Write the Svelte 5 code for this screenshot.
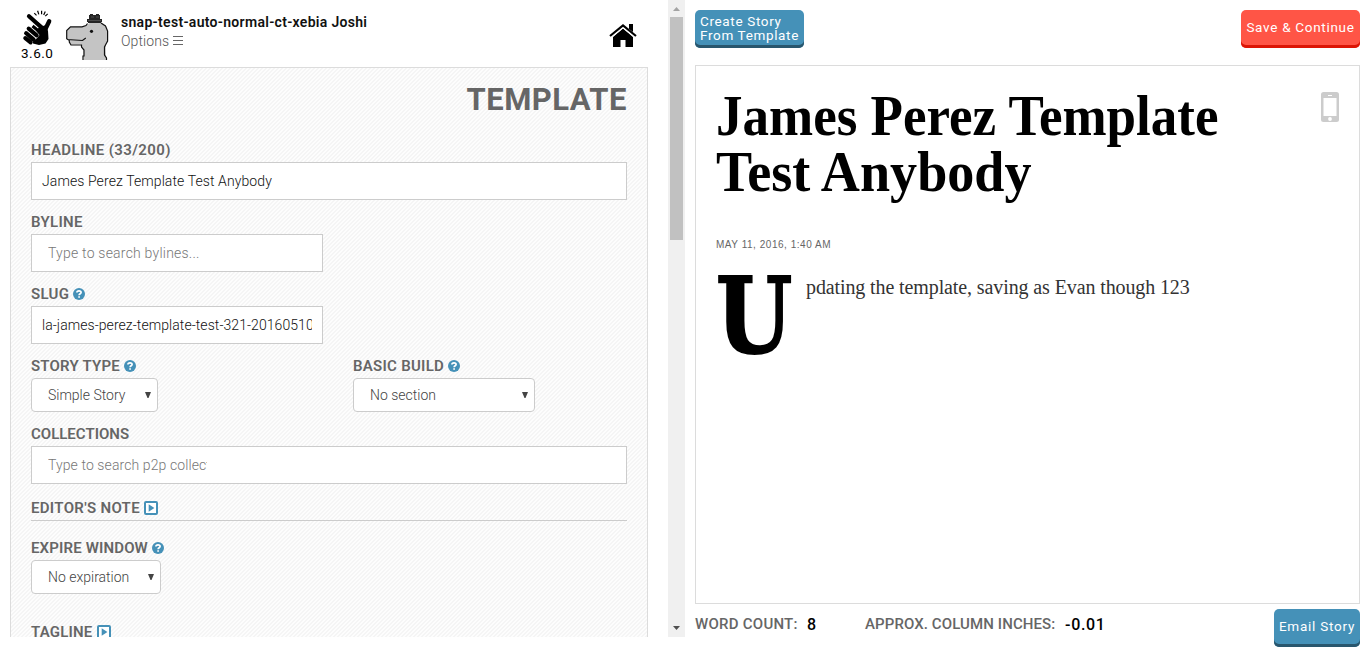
<script>
  let headline = $state('James Perez Template Test Anybody');
  let slug = $state('la-james-perez-template-test-321-20160510');
</script>

{#snippet help()}
  <svg class="help" viewBox="0 0 12 12" width="12" height="12">
    <circle cx="6" cy="6" r="6" fill="#4591b8" />
    <path d="M3.9 4.6C3.9 2.2 8.1 2.2 8.1 4.5C8.1 5.8 6.1 5.8 6.1 7.2M6.1 8.2V9.7" fill="none" stroke="#fff" stroke-width="1.7" />
  </svg>
{/snippet}

{#snippet expand()}
  <svg class="expand" viewBox="0 0 14 14" width="14" height="14">
    <rect x="1" y="1" width="12" height="12" rx="1" fill="#fff" stroke="#4591b8" stroke-width="2" />
    <path d="M4.7 3.2L10.4 7L4.7 10.8Z" fill="#4591b8" />
  </svg>
{/snippet}

{#snippet arrow()}
  <svg class="arrow" viewBox="0 0 6 6" width="6" height="6"><path d="M0 0H6L3.5 6H2.5Z" fill="#444" /></svg>
{/snippet}

<div class="app">
  <div class="left">
    <div class="scroll">
      <header>
        <div class="brand">
          <svg viewBox="22 9 32 37" width="32" height="37">
            <g fill="none" stroke="#000" stroke-linecap="round">
              <path d="M29 16.2L41 27" stroke-width="4.2" />
              <path d="M49.2 21.3L44.5 31" stroke-width="4.3" />
              <path d="M28.7 28.6L36.7 35.4M26.1 33.2L33.5 39.3M25.3 38.1L30.6 42.4" stroke-width="4.1" />
              <path d="M34.3 13.2L36.5 15.4M37.6 10.8L38.8 14.4M41.6 10.7V14.2M45.3 11.5L43.7 14.9M47.7 13.8L45.3 16.2" stroke-width="1.2" stroke-linecap="butt" />
            </g>
            <path d="M34 22.5L38 22L43 26L46 25L48 31L48.5 39L45.5 43.5L39 45L33 43.5L32.5 41.8L37.5 37.8L39.5 35L35.8 30.8L31.5 27.2L33.5 24.8L38 28.5L39 27.3Z" />
          </svg>
          <span>3.6.0</span>
        </div>
        <svg class="dino" viewBox="66 14 44 46" width="44" height="46">
          <path d="M83.5 60V49L81 46V44.5H71L69.5 41.5L66.7 39V30.5L70 27H82L86 25.5L90 22.7H101L105.5 26L107.7 31V40L105.5 45V51L106.5 60Z" fill="#c4c4c4" />
          <path d="M83 60V56H84V50L81.5 47V45H71L69.3 42V40.5L66.7 38.8V30.5L70.5 26.9H82L86 25.6L87.5 23.5M67 39.5L82.5 40.5L85.8 38M101 23L105.5 26L107.6 31V41L106 44L104.5 47V55L106.5 58V60" fill="none" stroke="#111" stroke-width="1.2" />
          <path d="M89 15H90V14H93V15H96V14H99V15H100V19H102V22H101V23H88V22H87V19H89Z" fill="#252525" />
          <path d="M91 17H94M96 17H99M88 20.5H101" stroke="#555" stroke-width=".8" />
          <circle cx="91.5" cy="31.3" r="1.6" fill="#111" />
        </svg>
        <div class="user">
          <strong>snap-test-auto-normal-ct-xebia Joshi</strong>
          <div class="options"><span>Options</span>
            <svg viewBox="0 0 10 10" width="10" height="10"><path d="M0 .5H10M0 4.5H10M0 8.5H10" stroke="#666" /></svg>
          </div>
        </div>
        <svg class="home" viewBox="0 0 28 23" width="28" height="23">
          <path d="M4 13L14 4.5L24 13V23H16.5V16H11.5V23H4Z" />
          <path d="M1 12L14 1.5L27 12" fill="none" stroke="#000" stroke-width="2.2" />
          <path d="M20 0H24V8L20 5Z" />
          <path d="M3 13L14 4L25 13" fill="none" stroke="#fff" stroke-width="1" />
        </svg>
      </header>

      <section class="panel">
        <h2>TEMPLATE</h2>
        <div class="group">
          <div class="label l-headline">HEADLINE ({headline.length}/200)</div>
          <input class="wide" bind:value={headline} />
        </div>
        <div class="group">
          <div class="label l-note">BYLINE</div>
          <input class="half indent" placeholder="Type to search bylines..." />
        </div>
        <div class="group">
          <div class="label l-build"><span>SLUG</span>{@render help()}</div>
          <input class="half slug" bind:value={slug} />
        </div>
        <div class="columns">
          <div class="group">
            <div class="label l-story"><span>STORY TYPE</span>{@render help()}</div>
            <div class="select story"><span>Simple Story</span>{@render arrow()}</div>
          </div>
          <div class="group">
            <div class="label l-build"><span>BASIC BUILD</span>{@render help()}</div>
            <div class="select build"><span>No section</span>{@render arrow()}</div>
          </div>
        </div>
        <div class="group">
          <div class="label">COLLECTIONS</div>
          <div class="tokens"><div>Type to search p2p collections...</div></div>
        </div>
        <div class="label fold l-note"><span>EDITOR'S NOTE</span>{@render expand()}</div>
        <div class="group expire">
          <div class="label l-expire"><span>EXPIRE WINDOW</span>{@render help()}</div>
          <div class="select window"><span>No expiration</span>{@render arrow()}</div>
        </div>
        <div class="label l-story"><span>TAGLINE</span>{@render expand()}</div>
      </section>
    </div>
    <div class="scrollbar">
      <svg viewBox="0 0 17 17" width="17" height="17"><path d="M5 11H12L8.5 7Z" fill="#a3a3a3" /></svg>
      <div class="thumb"></div>
      <svg viewBox="0 0 17 17" width="17" height="17"><path d="M5 6H12L8.5 10Z" fill="#505050" /></svg>
    </div>
  </div>

  <main>
    <div class="bar">
      <button class="blue create"><span>Create Story</span><span>From Template</span></button>
      <button class="red">Save &amp; Continue</button>
    </div>
    <article>
      <svg class="phone" viewBox="0 0 18 30" width="18" height="30">
        <rect width="18" height="30" rx="2.5" fill="#ccc" />
        <rect x="2.5" y="6" width="13" height="18" fill="#fff" />
        <circle cx="9" cy="27" r="1.9" fill="#fff" />
        <path d="M7 3.5H11" stroke="#fff" />
      </svg>
      <h1><span class="h-a">James Perez Template</span><span class="h-b">Test Anybody</span></h1>
      <time>MAY 11, 2016, 1:40 AM</time>
      <div class="copy"><div class="cap"><span>U</span></div><p>pdating the template, saving as Evan though 123</p></div>
    </article>
    <footer>
      <span class="stat words">WORD COUNT:</span><b class="n-words">8</b>
      <span class="stat inches">APPROX. COLUMN INCHES:</span><b class="n-inches">-0.01</b>
      <button class="blue email">Email Story</button>
    </footer>
  </main>
</div>

<style>
  :global(body) { background: #fff; }
  .app { display: flex; width: 1370px; height: 656px; overflow: hidden; font-family: Roboto, "Liberation Sans", sans-serif; box-sizing: border-box; }
  .app :global(*) { box-sizing: border-box; }
  svg { display: block; flex: none; }
  .left { display: flex; width: 685px; height: 637px; overflow: hidden; }
  .scroll { width: 668px; padding-left: 10px; overflow: hidden; }
  .scrollbar { width: 17px; background: #f0f0f0; display: flex; flex-direction: column; }
  .thumb { width: 13px; height: 223px; margin: 0 2px auto; background: #c1c1c1; }
  header { width: 638px; height: 67px; display: flex; align-items: flex-start; }
  .brand { width: 56px; padding: 9px 0 0 12px; }
  .brand span { display: block; margin: -1px 0 0 -1px; line-height: 16px; font-size: 13.5px; letter-spacing: .5px; white-space: nowrap; }
  .dino { margin-top: 14px; }
  .user { flex: 1; padding: 12px 0 0 11px; }
  strong { display: block; font-size: 14px; line-height: 20px; font-weight: 600; color: #111; white-space: nowrap; letter-spacing: .3px; }
  .options { display: flex; align-items: center; gap: 4px; font-size: 14px; line-height: 18px; font-weight: 300; color: #555; letter-spacing: .1px; }
  .home { margin: 24px 11px 0 0; }
  .panel { width: 638px; height: 900px; border: 1px solid #dcdcdc; padding: 0 20px; background: repeating-linear-gradient(-45deg, #fdfdfd 0, #fdfdfd 1.414px, #f5f5f5 1.414px, #f5f5f5 2.828px); }
  h2 { margin: 12px 0 20px; height: 40px; line-height: 40px; text-align: right; font-size: 31px; font-weight: 700; color: #666; letter-spacing: .5px; }
  .group { margin-bottom: 12px; }
  .label { display: flex; align-items: center; gap: 4px; height: 20px; margin-bottom: 2px; line-height: 20px; font-size: 15px; font-weight: 600; color: #666; white-space: nowrap; }
  .l-headline { letter-spacing: .4px; }
  .l-note { letter-spacing: .32px; }
  .l-build { letter-spacing: .27px; }
  .l-story { letter-spacing: .2px; }
  .l-expire { letter-spacing: .15px; }
  input, .tokens { display: block; height: 38px; border: 1px solid #ccc; border-radius: 0; padding: 0 10px; background: #fff; font: 300 14px Roboto, sans-serif; color: #111; outline: 0; letter-spacing: .1px; }
  input::placeholder { color: #777; opacity: 1; font-weight: 300; letter-spacing: .22px; }
  .slug { letter-spacing: .07px; }
  .wide, .tokens { width: 596px; }
  .half { width: 292px; }
  .indent { padding-left: 16px; }
  .columns { display: grid; grid-template-columns: 322px 1fr; }
  .tokens { padding-left: 16px; line-height: 36px; font-weight: 300; color: #777; }
  .tokens div { width: 159px; overflow: hidden; white-space: nowrap; }
  .select { display: flex; align-items: center; justify-content: space-between; height: 34px; padding: 0 6px 0 16px; border: 1px solid #ccc; border-radius: 4px; background: #fff; font-size: 14px; font-weight: 300; color: #444; white-space: nowrap; }
  .story { width: 127px; }
  .build { width: 182px; }
  .window { width: 130px; }
  .fold { height: 25px; padding-bottom: 1px; margin-bottom: 17px; border-bottom: 1px solid #ccc; }
  .expire { margin-bottom: 28px; }
  main { width: 665px; margin-left: 10px; padding-top: 10px; }
  .bar { display: flex; justify-content: space-between; align-items: flex-start; height: 55px; }
  button { border: 0; border-radius: 5px; height: 38px; padding: 0 0 4px; color: #fff; font: 400 13.5px/14px Roboto, sans-serif; white-space: nowrap; }
  .blue { background: #4591b8; box-shadow: inset 0 -3px #29566d; }
  .red { width: 119px; background: #ff5546; box-shadow: inset 0 -3px #dc1505; letter-spacing: .7px; }
  .create { width: 109px; padding: 0 5px 2px; text-align: left; letter-spacing: .65px; }
  .create span { display: block; }
  article { position: relative; height: 539px; border: 1px solid #dcdcdc; padding: 22px 20px 0; }
  .phone { position: absolute; right: 20px; top: 26px; }
  h1 { margin: 0; font: 700 57px/56px "Liberation Serif", serif; color: #000; white-space: nowrap; }
  h1 span { display: block; width: max-content; transform-origin: left; }
  .h-a { transform: scaleX(.93); }
  .h-b { transform: scaleX(.95); }
  time { display: block; margin-top: 37px; font: 400 10px/16px "Liberation Sans", sans-serif; color: #666; letter-spacing: .53px; }
  .copy { display: flex; margin-top: 20px; }
  .cap { width: 90px; height: 90px; margin-top: -1px; margin-bottom: 1px; font: 700 104px/90px "DejaVu Serif", serif; color: #000; -webkit-text-stroke: 2px #000; }
  .cap span { display: inline-block; transform: scaleX(.84); transform-origin: left; }
  p { margin: 2px 0; font: 400 20px/24px "Liberation Serif", serif; color: #333; white-space: nowrap; letter-spacing: -.11px; }
  footer { display: flex; padding-top: 6px; line-height: 29px; font-size: 15px; color: #666; white-space: nowrap; }
  .stat { font-weight: 500; }
  .words { width: 112px; letter-spacing: .25px; }
  .inches { width: 200px; letter-spacing: .1px; }
  footer b { color: #000; font-weight: 500; font-size: 16px; }
  .n-words { width: 58px; }
  .n-inches { letter-spacing: .7px; }
  .email { width: 86px; margin: -1px 0 0 auto; letter-spacing: .75px; }
</style>
